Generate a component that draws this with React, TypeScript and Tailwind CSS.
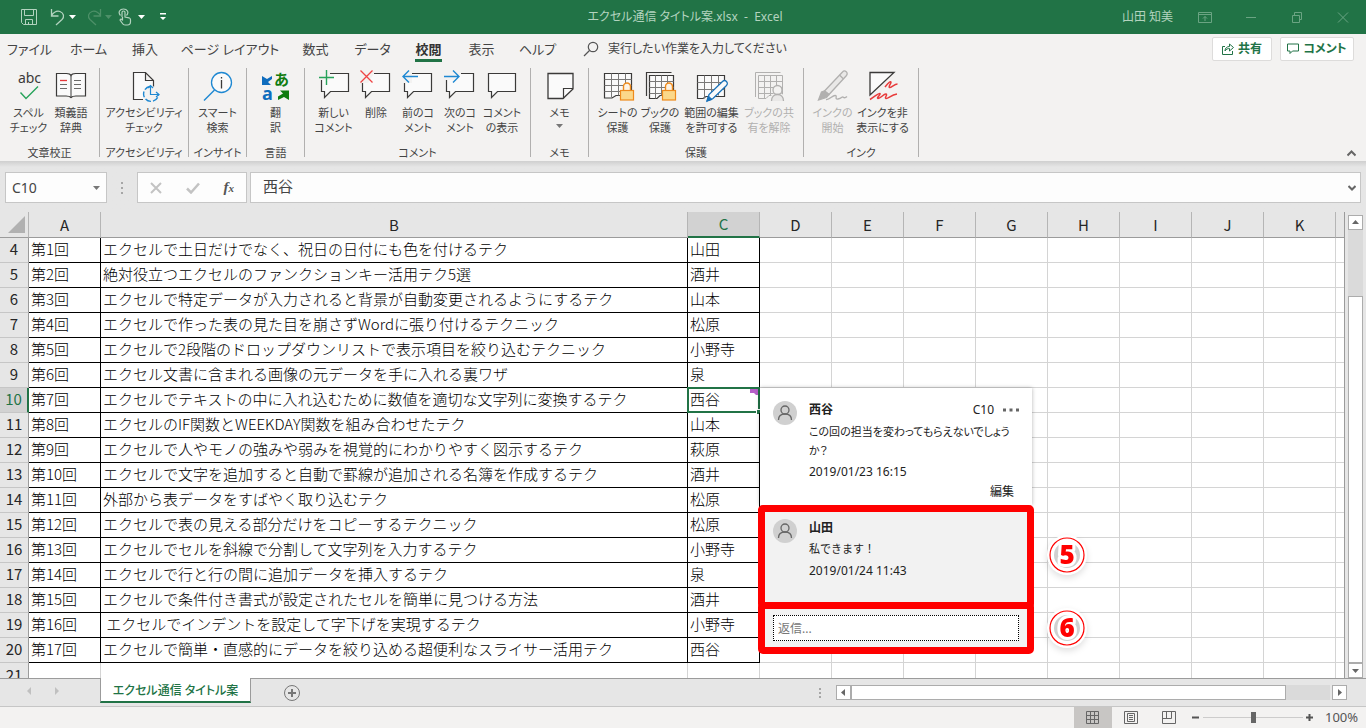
import type { ReactNode } from "react";
import clsx from "clsx";

const rows = [
  { no: 4, round: "第1回", title: "エクセルで土日だけでなく、祝日の日付にも色を付けるテク", owner: "山田" },
  { no: 5, round: "第2回", title: "絶対役立つエクセルのファンクションキー活用テク5選", owner: "酒井" },
  { no: 6, round: "第3回", title: "エクセルで特定データが入力されると背景が自動変更されるようにするテク", owner: "山本" },
  { no: 7, round: "第4回", title: "エクセルで作った表の見た目を崩さずWordに張り付けるテクニック", owner: "松原" },
  { no: 8, round: "第5回", title: "エクセルで2段階のドロップダウンリストで表示項目を絞り込むテクニック", owner: "小野寺" },
  { no: 9, round: "第6回", title: "エクセル文書に含まれる画像の元データを手に入れる裏ワザ", owner: "泉" },
  { no: 10, round: "第7回", title: "エクセルでテキストの中に入れ込むために数値を適切な文字列に変換するテク", owner: "西谷" },
  { no: 11, round: "第8回", title: "エクセルのIF関数とWEEKDAY関数を組み合わせたテク", owner: "山本" },
  { no: 12, round: "第9回", title: "エクセルで人やモノの強みや弱みを視覚的にわかりやすく図示するテク", owner: "萩原" },
  { no: 13, round: "第10回", title: "エクセルで文字を追加すると自動で罫線が追加される名簿を作成するテク", owner: "酒井" },
  { no: 14, round: "第11回", title: "外部から表データをすばやく取り込むテク", owner: "松原" },
  { no: 15, round: "第12回", title: "エクセルで表の見える部分だけをコピーするテクニック", owner: "松原" },
  { no: 16, round: "第13回", title: "エクセルでセルを斜線で分割して文字列を入力するテク", owner: "小野寺" },
  { no: 17, round: "第14回", title: "エクセルで行と行の間に追加データを挿入するテク", owner: "泉" },
  { no: 18, round: "第15回", title: "エクセルで条件付き書式が設定されたセルを簡単に見つける方法", owner: "酒井" },
  { no: 19, round: "第16回", title: "\u00a0エクセルでインデントを設定して字下げを実現するテク", owner: "小野寺" },
  { no: 20, round: "第17回", title: "エクセルで簡単・直感的にデータを絞り込める超便利なスライサー活用テク", owner: "西谷" },
];

const emptyCols = ["D", "E", "F", "G", "H", "I", "J", "K"];

const tabs = [
  { label: "ファイル", width: "w-[59px]" },
  { label: "ホーム", width: "w-[59px]" },
  { label: "挿入", width: "w-[54px]" },
  { label: "ページ レイアウト", width: "w-[116px]" },
  { label: "数式", width: "w-[55px]" },
  { label: "データ", width: "w-[59px]" },
  { label: "校閲", width: "w-[53px]", active: true },
  { label: "表示", width: "w-[53px]" },
  { label: "ヘルプ", width: "w-[59px]" },
];

/* Ribbon icons, all on a 32x32 grid */
function Icon({ children }: { children: ReactNode }) {
  return (
    <svg className="w-8 h-8 overflow-visible" viewBox="0 0 32 32" fill="none" stroke="#3b3a39" aria-hidden="true">
      {children}
    </svg>
  );
}

const SpellIcon = () => (
  <Icon>
    <text x="16.5" y="14" textAnchor="middle" fontSize="14" fill="#3b3a39" stroke="none">
      abc
    </text>
    <path d="M7.5 23.5l5.5 6 12-12" stroke="#27a35a" strokeWidth="1.4" />
  </Icon>
);

const BookIcon = () => (
  <Icon>
    <path fill="#fafafa" strokeWidth="1.2" d="M1.5 4.5h10c2.5 0 4 1 4.500 2 .5-1 2-2 4.500-2h10v22.500h-9.500c-2.500 0-4 .5-5 1.500-1-1-2.500-1.500-5-1.500H1.500z" />
    <path d="M16 6.500v22" />
    <path d="M5 11.500h7" stroke="#e5383b" strokeWidth="1.300" />
    <path d="M5 15.500h7M5 19.500h7M19 11.500h7M19 15.500h7M19 19.500h7" stroke="#6b6a69" />
  </Icon>
);

const AccessibilityIcon = () => (
  <Icon>
    <path fill="#fafafa" strokeWidth="1.200" d="M15 30.500H5.500v-27h12l8 8V18M17.500 3.500v8h8" />
    <circle cx="23" cy="25" r="8" fill="#f3f2f1" stroke="none" />
    <path d="M22 17.500a7.500 7.500 0 1 0 8.500 8.500" stroke="#1e88d2" strokeWidth="1.400" strokeDasharray="6 2" />
    <path d="M22.500 16.500v9h8M28 23l3 2.500-3 2.500M20 19l2.500-2.500L25 19" stroke="#1e88d2" strokeWidth="1.200" />
  </Icon>
);

const SmartSearchIcon = () => (
  <Icon>
    <circle cx="19.500" cy="13.500" r="10" fill="#fafafa" stroke="#1e88d2" strokeWidth="1.300" />
    <path d="M12.500 21L2 31.500" stroke="#1e88d2" strokeWidth="1.400" />
    <path d="M19.500 11v8.500M19.500 8v1.500" strokeWidth="1.300" />
  </Icon>
);

const TranslateIcon = () => (
  <Icon>
    <path d="M2 7v9h9l-3-3 4-3V7l-5 3z" fill="#0f6cbd" stroke="none" />
    <text x="2" y="31" fontSize="18" fontWeight="700" fill="#0f6cbd" stroke="none">
      a
    </text>
    <text x="14" y="16" fontSize="15" fontWeight="700" fill="#107c10" stroke="none">
      あ
    </text>
    <path d="M29 31v-9.500h-9l3 3-5 3V31l6-3z" fill="#107c10" stroke="none" />
  </Icon>
);

const NewCommentIcon = () => (
  <Icon>
    <path d="M3.500 11v11.500h3v6l6-6h18v-18H12V11z" fill="#fafafa" stroke="none" />
    <path d="M12 4.500h18.500v18h-18l-6 6v-6h-3V11" strokeWidth="1.200" />
    <path d="M1 8.500h15M8.500 1v15" stroke="#27a35a" strokeWidth="1.400" />
  </Icon>
);

const DeleteCommentIcon = () => (
  <Icon>
    <path d="M2.500 14v8.500h3v6l6-6h18v-18H14L8 14z" fill="#fafafa" stroke="none" />
    <path d="M14 4.500h15.500v18h-18l-6 6v-6h-3V14" strokeWidth="1.200" />
    <path d="M.5 1.500l12 12M12.500 1.500l-12 12" stroke="#ef4444" strokeWidth="1.300" />
  </Icon>
);

const PrevCommentIcon = () => (
  <Icon>
    <path d="M2.500 14v8.500h3v6l6-6h18v-18H10V14z" fill="#fafafa" stroke="none" />
    <path d="M10 4.500h19.500v18h-18l-6 6v-6h-3V14" strokeWidth="1.200" />
    <path d="M16 7.500H1M7 1.500l-6 6 6 6" stroke="#1e88d2" strokeWidth="1.400" />
  </Icon>
);

const NextCommentIcon = () => (
  <Icon>
    <path d="M2.500 11v11.500h3v6l6-6h18v-18H17L10 11z" fill="#fafafa" stroke="none" />
    <path d="M17 4.500h12.500v18h-18l-6 6v-6h-3V11" strokeWidth="1.200" />
    <path d="M0 7.500h15M9 1.500l6 6-6 6" stroke="#1e88d2" strokeWidth="1.400" />
  </Icon>
);

const ShowCommentIcon = () => (
  <Icon>
    <path d="M2.500 4.500h27v18h-18l-6 6v-6h-3z" fill="#fafafa" strokeWidth="1.200" />
  </Icon>
);

const MemoIcon = () => (
  <Icon>
    <path d="M4 4.500h25v15.500l-10 9.500H4z" fill="#fafafa" strokeWidth="1.300" />
    <path d="M29 19.500H19.500V29.500" strokeWidth="1.200" />
  </Icon>
);

function Lock() {
  return (
    <g stroke="#ee8a1c">
      <path d="M21.500 22v-4.500a3.500 3.500 0 0 1 7 0V22" fill="#fdf3e4" strokeWidth="1.400" />
      <rect x="18.500" y="21.500" width="13" height="9.500" fill="#fbd88a" strokeWidth="1.200" />
    </g>
  );
}

const ProtectSheetIcon = () => (
  <Icon>
    <path d="M2.500 4.500h27v22H14l-4 2.500H2.500z" fill="#fafafa" strokeWidth="1.200" />
    <path d="M2.500 10.500h27M2.500 16.500h27M2.500 22.500h27M9.500 4.500v24M16.500 4.500v22M23.500 4.500v18" stroke="#7a7978" />
    <Lock />
  </Icon>
);

const ProtectBookIcon = () => (
  <Icon>
    <path d="M2.500 27V3.500h25" strokeWidth="1.200" />
    <path d="M5.500 6.500h24v20H16l-3 3H5.500z" fill="#fafafa" strokeWidth="1.200" />
    <path d="M5.500 12.500h24M5.500 18.500h24M5.500 24.500h24M11.500 6.500v23M17.500 6.500v20M23.500 6.500v16" stroke="#7a7978" />
    <Lock />
  </Icon>
);

const EditRangeIcon = () => (
  <Icon>
    <path d="M1.500 6.500h27v21H10l-3 2H1.500z" fill="#fafafa" strokeWidth="1.200" />
    <path d="M1.500 13.500h27M1.500 20.500h27M8.500 6.500v23M15.500 6.500v20M22.500 6.500v20" stroke="#7a7978" />
    <path d="M11 32l2-6.500L26.500 12.500a2.500 2.500 0 0 1 4 4L17 29.500z" fill="#fafafa" stroke="#1971b8" strokeWidth="1.300" />
    <path d="M11 32l1.500-5 3.500 3.500z" fill="#1971b8" stroke="#1971b8" />
  </Icon>
);

const UnshareIcon = () => (
  <Icon>
    <g stroke="#b1b0af">
      <path d="M2.500 28V3.500h25" />
      <path d="M5.500 6.500h24v20H16l-3 3H5.500z" />
      <path d="M5.500 12.500h24M5.500 18.500h24M5.500 24.500h24M11.500 6.500v23M17.500 6.500v20M23.500 6.500v16" />
      <path d="M18 32.500c0-5 3-7.500 6.500-7.500s6.500 2.500 6.500 7.500z" fill="#e9e8e7" stroke="#f3f2f1" strokeWidth="3" />
      <circle cx="24.500" cy="21" r="4.500" fill="#f3f2f1" strokeWidth="1.300" />
      <path d="M18.500 32c0-4 2.500-6.500 6-6.500s6 2.500 6 6.500" fill="#e9e8e7" strokeWidth="1.300" />
    </g>
  </Icon>
);

const InkStartIcon = () => (
  <Icon>
    <g stroke="#b1b0af" strokeWidth="1.300">
      <path d="M7.500 22L25.500 3a2.300 2.300 0 0 1 4 3.500L12 25.500z" fill="#e9e8e7" />
      <path d="M22.500 6l4 4" />
      <path d="M1.500 31l3-8 3-1 4.500 3.500-2.500 3z" fill="#b1b0af" />
      <path d="M9 30.500c4 .5 6-4 9-4s-1 4 3 3.500 4-3 5-2 2 1.500 4-.5" />
    </g>
  </Icon>
);

const HideInkIcon = () => (
  <Icon>
    <path d="M3 3.500h24L3 26z" fill="#fafafa" strokeWidth="1.300" />
    <path d="M18 18c4-5 5.500-6 6-5s-3 5-1.500 5.500 5-3.500 8-3.500" stroke="#e83a3a" strokeWidth="1.500" />
    <path d="M3 30.500c5-3 9-7 10-6s-4 4.500-2 5 6-5 8-4.500-2 4 0 4.500 5-3.500 11-4.500" stroke="#e83a3a" strokeWidth="1.500" />
  </Icon>
);

type Command = { icon: ReactNode; lines: string[]; width: string; disabled?: boolean; menu?: boolean };

const groups: { name: string; width: string; commands: Command[] }[] = [
  {
    name: "文章校正",
    width: "w-[100px]",
    commands: [
      { icon: <SpellIcon />, lines: ["スペル", "チェック"], width: "w-[43px]" },
      { icon: <BookIcon />, lines: ["類義語", "辞典"], width: "w-[42px]" },
    ],
  },
  {
    name: "アクセシビリティ",
    width: "w-[89px]",
    commands: [{ icon: <AccessibilityIcon />, lines: ["アクセシビリティ", "チェック"], width: "w-[80px]" }],
  },
  { name: "インサイト", width: "w-[58px]", commands: [{ icon: <SmartSearchIcon />, lines: ["スマート", "検索"], width: "w-[43px]" }] },
  { name: "言語", width: "w-[58px]", commands: [{ icon: <TranslateIcon />, lines: ["翻", "訳"], width: "w-[43px]" }] },
  {
    name: "コメント",
    width: "w-[226px]",
    commands: [
      { icon: <NewCommentIcon />, lines: ["新しい", "コメント"], width: "w-[43px]" },
      { icon: <DeleteCommentIcon />, lines: ["削除"], width: "w-[42px]" },
      { icon: <PrevCommentIcon />, lines: ["前のコ", "メント"], width: "w-[42px]" },
      { icon: <NextCommentIcon />, lines: ["次のコ", "メント"], width: "w-[42px]" },
      { icon: <ShowCommentIcon />, lines: ["コメント", "の表示"], width: "w-[42px]" },
    ],
  },
  { name: "メモ", width: "w-[58px]", commands: [{ icon: <MemoIcon />, lines: ["メモ"], width: "w-[43px]", menu: true }] },
  {
    name: "保護",
    width: "w-[215px]",
    commands: [
      { icon: <ProtectSheetIcon />, lines: ["シートの", "保護"], width: "w-[43px]" },
      { icon: <ProtectBookIcon />, lines: ["ブックの", "保護"], width: "w-[42px]" },
      { icon: <EditRangeIcon />, lines: ["範囲の編集", "を許可する"], width: "w-[61px]" },
      { icon: <UnshareIcon />, lines: ["ブックの共", "有を解除"], width: "w-[54px]", disabled: true },
    ],
  },
  {
    name: "インク",
    width: "w-[115px]",
    commands: [
      { icon: <InkStartIcon />, lines: ["インクの", "開始"], width: "w-[43px]", disabled: true },
      { icon: <HideInkIcon />, lines: ["インクを非", "表示にする"], width: "w-[57px]" },
    ],
  },
];

function Caret({ className }: { className?: string }) {
  return (
    <svg className={clsx("w-[7px] h-1 shrink-0", className)} viewBox="0 0 7 4" fill="currentColor" aria-hidden="true">
      <path d="M0 0h7L3.500 4z" />
    </svg>
  );
}

function TitleBar() {
  return (
    <header className="h-[34px] shrink-0 bg-[#217346] text-[#b3d3bf] flex items-center">
      <div className="flex-1 flex items-center pl-5">
        <button aria-label="上書き保存">
          <svg className="w-[18px] h-[18px]" viewBox="0 0 18 18" fill="none" stroke="currentColor">
            <path d="M1.500 1.500h15v15h-13l-2-2zM4.500 1.500v6h9v-6M5.500 16.500v-5h7v5M8.500 14v2" />
          </svg>
        </button>
        <button aria-label="元に戻す" className="ml-3 flex items-center gap-[3px]">
          <svg className="w-4 h-[18px]" viewBox="0 0 16 18" fill="none" stroke="currentColor" strokeWidth="1.300">
            <path d="M1.500 1v7h7M1.500 7.500C4 4 7 2.500 10 3.500c4 1.500 4.500 5.500 2 8L6 17" />
          </svg>
          <Caret className="text-white" />
        </button>
        <button aria-label="やり直し" className="ml-[10px] flex items-center gap-[3px] text-[#4d9068]">
          <svg className="w-4 h-[18px]" viewBox="0 0 16 18" fill="none" stroke="currentColor" strokeWidth="1.300">
            <path d="M14.500 1v7h-7M14.500 7.500C12 4 9 2.500 6 3.500c-4 1.500-4.500 5.500-2 8L10 17" />
          </svg>
          <Caret />
        </button>
        <button aria-label="タッチ/マウス モードの切り替え" className="ml-[6px] flex items-center gap-[6px]">
          <svg className="w-[14px] h-[18px]" viewBox="0 0 14 18" fill="none" stroke="currentColor" strokeWidth="1.200">
            <path d="M4 9V4.500a1.500 1.500 0 0 1 3 0V9l4 .8c1 .3 1.500 1 1.500 2v2c0 2-1 3.200-3 3.200H7c-1.500 0-2-.5-2.500-1.500L2 12c1-1.500 2-.5 2.500.5V9" />
            <path d="M2.500 7.500C-.5 4 2 1 5.500 1s6 3 3 6.500" />
          </svg>
          <Caret className="text-white" />
        </button>
        <button aria-label="クイック アクセス ツール バーのカスタマイズ" className="ml-[14px] text-white">
          <svg className="w-2 h-2" viewBox="0 0 8 8" fill="currentColor">
            <path d="M1 0h6v1.500H1zM1 4h6L4 7z" />
          </svg>
        </button>
      </div>
      <h1 className="text-[12px] whitespace-pre">エクセル通信 タイトル案.xlsx  -  Excel</h1>
      <div className="flex-1 flex items-center justify-end pr-4">
        <span className="text-[12px] mr-[25px]">山田 知美</span>
        <div className="flex items-center gap-8 text-[#6ba483]">
          <button aria-label="リボンの表示オプション">
            <svg className="w-[14px] h-[11px]" viewBox="0 0 14 11" fill="none" stroke="currentColor">
              <path d="M.5.5h13v10H.5zM.5 2.500h13M7 9V4.500M5 6.500l2-2 2 2" />
            </svg>
          </button>
          <button aria-label="最小化">
            <svg className="w-[14px] h-[11px]" viewBox="0 0 14 11" stroke="currentColor">
              <path d="M2 5.500h10" />
            </svg>
          </button>
          <button aria-label="元に戻す (縮小)">
            <svg className="w-[14px] h-[11px]" viewBox="0 0 14 11" fill="none" stroke="currentColor">
              <path d="M2.500 3.500h7v7h-7zM4.500 3.500v-3h7v7h-2" />
            </svg>
          </button>
          <button aria-label="閉じる">
            <svg className="w-[14px] h-[11px]" viewBox="0 0 14 11" stroke="currentColor">
              <path d="M2 .5l10 10M12 .5l-10 10" />
            </svg>
          </button>
        </div>
      </div>
    </header>
  );
}

function TabRow() {
  return (
    <nav className="h-8 flex items-start text-[13px] text-[#444]">
      {tabs.map((tab) => (
        <button key={tab.label} className={clsx("shrink-0 flex justify-center whitespace-nowrap", tab.width)}>
          <span
            className={clsx(
              "h-7 pt-[6px] leading-[18px]",
              tab.active && "font-bold text-[#333] border-b-3 border-[#217346]",
            )}
          >
            {tab.label}
          </span>
        </button>
      ))}
      <label className="flex items-center h-[30px] ml-4 flex-1">
        <svg className="w-4 h-4 mr-[9px] shrink-0" viewBox="0 0 16 16" fill="none" stroke="#555" strokeWidth="1.200" aria-hidden="true">
          <circle cx="10" cy="6" r="4.700" />
          <path d="M6.500 9.500L1 15" />
        </svg>
        <input className="flex-1 text-[12px] outline-none placeholder:text-[#444]" placeholder="実行したい作業を入力してください" aria-label="操作アシスト" />
      </label>
      <div className="flex gap-2 pt-[3px] pr-[12px] text-[12px] font-bold text-[#217346]">
        <button className="h-6 w-[60px] bg-white border border-[#dddcdb] rounded-[2px] flex items-center justify-center gap-1">
          <svg className="w-3 h-3" viewBox="0 0 12 12" fill="none" stroke="currentColor">
            <path d="M3 3.500H.5v8h10V8M3 8c0-3 2-4.500 4.500-4.500V1L11.500 4.500 7.500 8V5.500C6 5.500 4 6 3 8z" />
          </svg>
          共有
        </button>
        <button className="h-6 w-[74px] bg-white border border-[#dddcdb] rounded-[2px] flex items-center justify-center gap-1 whitespace-nowrap">
          <svg className="w-3 h-3 shrink-0" viewBox="0 0 12 12" fill="none" stroke="currentColor">
            <path d="M.5 1h11v7H5.500L3 10.500V8H.5z" />
          </svg>
          コメント
        </button>
      </div>
    </nav>
  );
}

function Ribbon() {
  return (
    <div className="flex items-end pt-[2px] pb-1 text-[11px] text-[#444]">
      {groups.map((group) => (
        <section
          key={group.name}
          className={clsx("h-[89px] shrink-0 flex flex-col items-center border-r border-[#b1b0af] pt-px", group.width)}
        >
          <div className="flex">
            {group.commands.map((cmd) => (
              <button
                key={cmd.lines.join("")}
                disabled={cmd.disabled}
                className={clsx("shrink-0 flex flex-col items-center whitespace-nowrap", cmd.width, cmd.disabled && "text-[#b1b0af]")}
              >
                {cmd.icon}
                <span className="mt-1 leading-[15px] flex flex-col items-center">
                  {cmd.lines.map((line) => (
                    <span key={line}>{line}</span>
                  ))}
                </span>
                {cmd.menu && <Caret className="mt-1 text-[#777]" />}
              </button>
            ))}
          </div>
          <h2 className="mt-auto leading-2 whitespace-nowrap">{group.name}</h2>
        </section>
      ))}
      <button aria-label="リボンを折りたたむ" className="ml-auto mr-[10px]">
        <svg className="w-[9px] h-[7px]" viewBox="0 0 9 7" fill="none" stroke="#666" strokeWidth="2">
          <path d="M.5 5.500l4-4 4 4" />
        </svg>
      </button>
    </div>
  );
}

function FormulaBar() {
  return (
    <div className="shrink-0 bg-linear-to-b from-[#cfcfcf] to-[#e6e6e6] to-[6px] pt-[11px] pb-[9px] px-[5px] flex items-center text-[#444]">
      <div className="w-[102px] h-[31px] bg-[#fdfdfd] border border-[#c6c6c6] flex items-center pl-[6px] pr-[6px]">
        <input className="flex-1 min-w-0 text-[14px] outline-none" defaultValue="C10" aria-label="名前ボックス" />
        <Caret className="text-[#777]" />
      </div>
      <svg className="w-[30px] h-3" viewBox="0 0 30 12" fill="#a6a6a6" aria-hidden="true">
        <path d="M14 0h2v2h-2zM14 5h2v2h-2zM14 10h2v2h-2z" />
      </svg>
      <div className="w-[110px] h-[31px] bg-[#fdfdfd] border border-[#c6c6c6] flex items-center justify-between pl-3 pr-3">
        <button aria-label="キャンセル">
          <svg className="w-3 h-3" viewBox="0 0 12 12" stroke="#c3c3c3" strokeWidth="2">
            <path d="M1 1l10 10M11 1L1 11" />
          </svg>
        </button>
        <button aria-label="入力">
          <svg className="w-[14px] h-3" viewBox="0 0 14 12" fill="none" stroke="#c3c3c3" strokeWidth="2.500">
            <path d="M1 6.500l4 4L13 1.500" />
          </svg>
        </button>
        <button aria-label="関数の挿入" className="font-['Liberation_Serif',serif] italic font-bold text-[15px] leading-4 text-[#555]">
          f<span className="text-[11px]">x</span>
        </button>
      </div>
      <div className="ml-[3px] flex-1 h-[31px] bg-[#fdfdfd] border border-[#c6c6c6] flex items-center pl-3 pr-1">
        <input className="flex-1 text-[15px] leading-5 pb-1 outline-none font-['Noto_Sans_CJK_JP',sans-serif]" defaultValue="西谷" aria-label="数式バー" />
        <svg className="w-2 h-[6px]" viewBox="0 0 8 6" fill="none" stroke="#666" strokeWidth="2" aria-hidden="true">
          <path d="M.5 1l3.500 3.500L7.500 1" />
        </svg>
      </div>
    </div>
  );
}

function Avatar() {
  return (
    <svg className="w-6 h-6 shrink-0" viewBox="0 0 24 24" fill="none" stroke="#666" strokeWidth="1.300" aria-hidden="true">
      <circle cx="12" cy="12" r="12" fill="#d0d0d0" stroke="none" />
      <circle cx="12" cy="9" r="4" />
      <path d="M5.500 19c0-4 2.500-6 6.500-6s6.500 2 6.500 6" />
    </svg>
  );
}

function Marker({ label }: { label: string }) {
  return (
    <svg className="w-12 h-12 drop-shadow-md" viewBox="0 0 48 48" role="img" aria-label={label}>
      <circle cx="24" cy="24" r="20" fill="#fff" />
      <circle cx="24" cy="24" r="17" fill="none" stroke="#f00" strokeWidth="1.200" />
      <circle cx="24" cy="24" r="13" fill="#d0d0d0" />
      <text
        x="24"
        y="33"
        textAnchor="middle"
        fontSize="26"
        fontWeight="900"
        fill="#f00"
        stroke="#fff"
        strokeWidth="6"
        strokeLinejoin="round"
        paintOrder="stroke"
      >
        {label}
      </text>
    </svg>
  );
}

function CommentThread() {
  return (
    <aside className="absolute left-[758px] top-[176px] w-[276px] z-20 text-[12px] text-[#222]">
      <article className="mx-[2px] h-[117px] bg-white shadow-[0_0_4px_rgba(0,0,0,0.3)] pl-[13px] pr-[13px] pt-[13px] flex gap-3">
        <Avatar />
        <div className="flex-1 flex flex-col">
          <div className="flex items-center leading-[18px]">
            <b className="flex-1">西谷</b>
            <span className="mr-[9px]">C10</span>
            <button aria-label="その他の操作">
              <svg className="w-4 h-1" viewBox="0 0 16 4" fill="#666">
                <path d="M0 .5h3v3H0zM6.500.5h3v3h-3zM13 .5h3v3h-3z" />
              </svg>
            </button>
          </div>
          <p className="mt-[3px] text-[11px] leading-[19px] whitespace-nowrap">
            この回の担当を変わってもらえないでしょう
            <br />
            か？
          </p>
          <time className="mt-[3px] leading-[18px]">2019/01/23 16:15</time>
          <button className="self-end mr-[5px] mt-[2px] leading-[18px]">編集</button>
        </div>
      </article>
      <article className="relative h-[104px] border-7 border-[#f00] rounded-[5px] bg-[#f2f2f2] pl-2 pt-[7px] flex gap-3">
        <Avatar />
        <div className="flex flex-col leading-[18px]">
          <b>山田</b>
          <p className="mt-[3px] text-[11px] [font-feature-settings:normal]">私できます！</p>
          <time className="mt-1">2019/01/24 11:43</time>
        </div>
        <div className="absolute left-[278px] top-[19px]">
          <Marker label="5" />
        </div>
      </article>
      <form className="relative -mt-[7px] h-[52px] border-7 border-[#f00] rounded-[5px] bg-[#f2f2f2] px-2 py-[6px]">
        <input
          className="w-full h-[26px] bg-white border border-dotted border-black px-1 outline-none placeholder:text-[#777]"
          placeholder="返信..."
          aria-label="返信"
        />
        <div className="absolute left-[278px] -top-[5px]">
          <Marker label="6" />
        </div>
      </form>
    </aside>
  );
}

function Sheet() {
  const head = "h-[26px] border-r border-b border-r-[#b5b5b5] border-b-[#9b9b9b] font-normal text-[#262626]";
  const cell = "pl-[2px] pb-[2px] border-r border-b border-black";
  const blank = "border-r border-b border-[#d4d4d4]";
  return (
    <div className="relative flex-1 min-w-0 overflow-hidden bg-white border-r border-[#9b9b9b]">
      <table className="w-full table-fixed border-separate border-spacing-0 text-[15px] leading-5 text-black font-light font-['Noto_Sans_CJK_JP',sans-serif] [font-feature-settings:normal]">
        <colgroup>
          <col className="w-[29px]" />
          <col className="w-[72px]" />
          <col className="w-[587px]" />
          <col className="w-[72px]" />
          {emptyCols.map((c) => (
            <col key={c} className="w-[72px]" />
          ))}
          <col />
        </colgroup>
        <thead>
          <tr className="bg-[#e6e6e6]">
            <th className={clsx(head, "pr-[3px]")}>
              <svg className="w-[17px] h-[17px] ml-auto" viewBox="0 0 17 17" aria-hidden="true">
                <path d="M17 0v17H0z" fill="#b1b1b1" />
              </svg>
            </th>
            <th className={head}>A</th>
            <th className={head}>B</th>
            <th className="h-[26px] bg-[#d2d2d2] border-r border-r-[#b5b5b5] border-b-2 border-b-[#217346] font-normal text-[#217346]">C</th>
            {emptyCols.map((c) => (
              <th key={c} className={head}>
                {c}
              </th>
            ))}
            <th className="border-b border-[#9b9b9b]" />
          </tr>
        </thead>
        <tbody>
          {rows.map((row) => {
            const selected = row.no === 10;
            return (
              <tr key={row.no} className="h-[25px] whitespace-nowrap">
                <th
                  className={clsx(
                    "pb-[2px] border-b border-b-[#c6c6c6] font-normal",
                    selected
                      ? "bg-[#d2d2d2] text-[#217346] border-r-2 border-r-[#217346]"
                      : "bg-[#e6e6e6] text-[#262626] border-r border-r-[#9b9b9b]",
                  )}
                >
                  {row.no}
                </th>
                <td className={cell}>{row.round}</td>
                <td className={cell}>{row.title}</td>
                <td className={clsx(cell, "relative")}>
                  {row.owner}
                  {selected && (
                    <>
                      <span className="absolute -inset-px border-2 border-[#217346]" />
                      <svg className="absolute right-px top-px w-2 h-[6px]" viewBox="0 0 8 6" aria-hidden="true">
                        <path d="M0 0h8v6H6L4 4H0z" fill="#b65fc8" />
                      </svg>
                      <span className="absolute -right-[2px] -bottom-[2px] w-[5px] h-[5px] bg-[#217346] border-l border-t border-white" />
                    </>
                  )}
                </td>
                {emptyCols.map((c) => (
                  <td key={c} className={blank} />
                ))}
                <td className="border-b border-[#d4d4d4]" />
              </tr>
            );
          })}
          <tr className="h-[25px]">
            <th className="pb-[2px] bg-[#e6e6e6] border-r border-[#9b9b9b] font-normal text-[#262626]">21</th>
            <td className={blank} />
            <td className={blank} />
            <td className={blank} />
            {emptyCols.map((c) => (
              <td key={c} className={blank} />
            ))}
            <td className="border-b border-[#d4d4d4]" />
          </tr>
        </tbody>
      </table>
      <CommentThread />
    </div>
  );
}

function ArrowButton({ d, label }: { d: string; label: string }) {
  return (
    <button aria-label={label} className="w-[15px] h-[15px] shrink-0 bg-white border border-[#acacac] flex items-center justify-center">
      <svg className="w-[7px] h-[7px]" viewBox="0 0 7 7" fill="#666">
        <path d={d} />
      </svg>
    </button>
  );
}

function SheetTabs() {
  return (
    <div className="h-[29px] shrink-0 bg-[#e6e6e6] border-t border-t-[#9b9b9b] border-b border-b-[#c6c6c6] flex items-center">
      <div className="w-[100px] flex items-center gap-[22px] pl-[26px] pb-1">
        <svg className="w-[6px] h-2" viewBox="0 0 6 8" fill="#c0c0c0" aria-hidden="true">
          <path d="M5 0v8L1 4z" />
        </svg>
        <svg className="w-[6px] h-2" viewBox="0 0 6 8" fill="#c0c0c0" aria-hidden="true">
          <path d="M1 0v8l4-4z" />
        </svg>
      </div>
      <button className="self-start -mt-px w-[151px] h-[25px] pt-[3px] bg-white border-x border-x-[#9b9b9b] border-b-2 border-b-[#217346] text-[12px] leading-5 font-medium text-[#217346]">
        エクセル通信 タイトル案
      </button>
      <button aria-label="新しいシート" className="ml-8">
        <svg className="w-[18px] h-[18px]" viewBox="0 0 18 18" fill="none" stroke="#777">
          <circle cx="9" cy="9" r="7.500" />
          <path d="M9 5v8M5 9h8" strokeWidth="2" />
        </svg>
      </button>
      <div className="ml-auto w-[547px] flex items-center">
        <svg className="w-[2px] h-[10px] mr-[15px]" viewBox="0 0 2 10" fill="#a6a6a6" aria-hidden="true">
          <path d="M0 0h2v2H0zM0 4h2v2H0zM0 8h2v2H0z" />
        </svg>
        <ArrowButton d="M5 0v7L1 3.500z" label="左へスクロール" />
        <div className="flex-1 h-[15px] bg-[#dadada] flex">
          <div className="w-[435px] bg-white border border-[#acacac]" />
        </div>
        <div className="w-[2px]" />
        <ArrowButton d="M2 0v7l4-3.500z" label="右へスクロール" />
        <div className="w-[19px]" />
      </div>
    </div>
  );
}

function StatusBar() {
  return (
    <footer className="h-[21px] shrink-0 bg-[#f3f2f1] flex items-center justify-end pr-2 text-[13px] text-[#555]">
      <button aria-label="標準" className="w-[38px] h-full bg-[#c8c6c4] flex items-center justify-center">
        <svg className="w-[14px] h-[14px]" viewBox="0 0 14 14" fill="none" stroke="#666">
          <path d="M.5.5h12v12H.5zM.5 4.500h12M.5 8.500h12M4.500.5v12M8.500.5v12" />
        </svg>
      </button>
      <button aria-label="ページ レイアウト" className="w-[38px] flex justify-center">
        <svg className="w-[14px] h-[14px]" viewBox="0 0 14 14" fill="none" stroke="#666">
          <path d="M.5.5h13v12H.5zM3.500 2.500h7v8h-7zM5 4.500h4M5 6.500h4M5 8.500h4" />
        </svg>
      </button>
      <button aria-label="改ページ プレビュー" className="w-[38px] flex justify-center">
        <svg className="w-[14px] h-[14px]" viewBox="0 0 14 14" fill="none" stroke="#666">
          <path d="M.5.5h13v12H.5zM.5 7.500h9v-7M4.500.5v7" />
        </svg>
      </button>
      <button aria-label="縮小" className="ml-1 w-[8px]">
        <svg className="w-[7px] h-[7px]" viewBox="0 0 7 7" stroke="#555" strokeWidth="2">
          <path d="M0 3.500h7" />
        </svg>
      </button>
      <input
        type="range"
        aria-label="ズーム"
        min={0}
        max={200}
        defaultValue={100}
        className="ml-[3px] w-[100px] h-[11px] appearance-none bg-linear-to-b from-transparent from-[5px] via-[#a6a6a6] via-[5px] to-transparent to-[6px] [&::-webkit-slider-thumb]:appearance-none [&::-webkit-slider-thumb]:w-[5px] [&::-webkit-slider-thumb]:h-[11px] [&::-webkit-slider-thumb]:bg-[#666]"
      />
      <button aria-label="拡大" className="ml-[3px]">
        <svg className="w-[7px] h-[7px]" viewBox="0 0 7 7" stroke="#555" strokeWidth="2">
          <path d="M0 3.500h7M3.500 0v7" />
        </svg>
      </button>
      <span className="ml-3 w-[33px] text-right">100%</span>
    </footer>
  );
}

export default function App() {
  return (
    <div className="h-screen flex flex-col overflow-hidden bg-[#e6e6e6] font-['Noto_Sans','Noto_Sans_CJK_JP',sans-serif] [font-feature-settings:'palt']">
      <TitleBar />
      <div className="shrink-0 bg-[#f3f2f1]">
        <TabRow />
        <Ribbon />
      </div>
      <FormulaBar />
      <main className="flex-1 min-h-0 flex">
        <Sheet />
        <div className="w-[21px] px-[3px] pt-[3px] flex flex-col">
          <ArrowButton d="M0 5h7L3.500 1z" label="上へスクロール" />
          <div className="flex-1 bg-[#dadada] pt-[66px] flex">
            <div className="flex-1 bg-white border border-[#acacac]" />
          </div>
          <ArrowButton d="M0 2h7L3.500 6z" label="下へスクロール" />
        </div>
      </main>
      <SheetTabs />
      <StatusBar />
    </div>
  );
}
